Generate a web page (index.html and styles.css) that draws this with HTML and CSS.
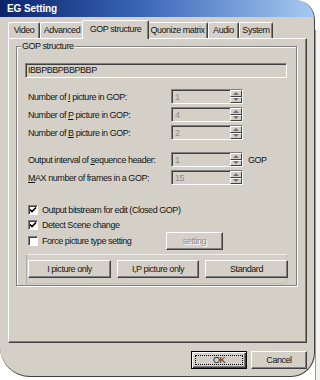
FILE: index.html
```html
<!DOCTYPE html>
<html>
<head>
    <meta charset="UTF-8">
    <title>MPEG Setting</title>
    <link rel="stylesheet" href="styles.css">
</head>
<body>
    <div class="screen">
        <div class="window">
            <div class="titlebar">EG Setting</div>

            <div class="tabs">
                <div class="tab video">Video</div>
                <div class="tab advanced">Advanced</div>
                <div class="tab active">GOP structure</div>
                <div class="tab quantize">Quonize matrix</div>
                <div class="tab audio">Audio</div>
                <div class="tab system">System</div>
            </div>

            <div class="panel">
                <div class="group">
                    <div class="legend">GOP structure</div>
                    <div class="pattern">IBBPBBPBBPBBP</div>

                    <div class="fields">
                        <span class="label">Number of <u>I</u> picture in GOP:</span>
                        <div class="spin"><span class="val">1</span><span class="arrows"><span class="up"></span><span class="down"></span></span></div>
                        <span></span>

                        <span class="label">Number of <u>P</u> picture in GOP:</span>
                        <div class="spin"><span class="val">4</span><span class="arrows"><span class="up"></span><span class="down"></span></span></div>
                        <span></span>

                        <span class="label">Number of <u>B</u> picture in GOP:</span>
                        <div class="spin"><span class="val">2</span><span class="arrows"><span class="up"></span><span class="down"></span></span></div>
                        <span></span>
                    </div>

                    <div class="fields second">
                        <span class="label">Output interval of <u>s</u>equence header:</span>
                        <div class="spin"><span class="val">1</span><span class="arrows"><span class="up"></span><span class="down"></span></span></div>
                        <span class="unit">GOP</span>

                        <span class="label"><u>M</u>AX number of frames in a GOP:</span>
                        <div class="spin"><span class="val">15</span><span class="arrows"><span class="up"></span><span class="down"></span></span></div>
                        <span></span>
                    </div>

                    <div class="checks">
                        <div class="check">
                            <span class="box"><svg width="8" height="8" viewBox="0 0 8 8"><path d="M1 3.5 L3 5.5 L7 1.5" stroke="#000" stroke-width="1.7" fill="none"/></svg></span>
                            Output bitstream for edit (Closed GOP)
                        </div>
                        <div class="check">
                            <span class="box"><svg width="8" height="8" viewBox="0 0 8 8"><path d="M1 3.5 L3 5.5 L7 1.5" stroke="#000" stroke-width="1.7" fill="none"/></svg></span>
                            Detect Scene change
                        </div>
                        <div class="check-row">
                            <div class="check wide">
                                <span class="box"></span>
                                Force picture type setting
                            </div>
                            <div class="btn small disabled">setting</div>
                        </div>
                    </div>

                    <div class="presets">
                        <div class="btn">I picture only</div>
                        <div class="btn">I,P picture only</div>
                        <div class="btn">Standard</div>
                    </div>
                </div>
            </div>

            <div class="footer">
                <div class="btn default"><span class="focus">OK</span></div>
                <div class="btn cancel">Cancel</div>
            </div>
        </div>
        <div class="behind"></div>
    </div>
</body>
</html>
```

FILE: styles.css
```css
body {
    margin: 0;
    background-color: #fff;
    font-family: "Liberation Sans", Arial, sans-serif;
    font-size: 9px;
    letter-spacing: -0.45px;
    color: #151515;
}
.screen {
    width: 320px;
    height: 380px;
    display: flex;
    align-items: flex-start;
    background-color: #fff;
    overflow: hidden;
}
.window {
    width: 316px;
    height: 377px;
    box-sizing: border-box;
    background-color: #d4d0c8;
    border-right: 1px solid #404040;
    border-bottom: 1px solid #404040;
    border-radius: 0 20px 24px 30px;
    overflow: hidden;
    display: flex;
    flex-direction: column;
}
.titlebar {
    height: 17px;
    flex: none;
    padding-left: 7px;
    display: flex;
    align-items: center;
    background: linear-gradient(90deg, #0a246a, #3a66b8 45%, #a6caf0);
    color: #fff;
    font-weight: bold;
    font-size: 10px;
    letter-spacing: -0.1px;
}
.tabs {
    height: 21px;
    flex: none;
    display: flex;
    align-items: flex-end;
    padding-left: 8px;
}
.tab {
    height: 16px;
    box-sizing: border-box;
    padding-bottom: 1px;
    display: flex;
    align-items: center;
    justify-content: center;
    border-top: 1px solid #fff;
    border-left: 1px solid #fff;
    border-right: 1px solid #404040;
    box-shadow: inset -1px 0 0 #808080;
    border-radius: 2px 2px 0 0;
    white-space: nowrap;
}
.tab.video {
    width: 32px;
}
.tab.advanced {
    width: 44px;
}
.tab.quantize {
    width: 61px;
}
.tab.audio {
    width: 31px;
}
.tab.system {
    width: 34px;
}
.tab.active {
    width: 67px;
    height: 19px;
    margin: 0 -2px -1px;
    padding-bottom: 3px;
    position: relative;
    z-index: 1;
    background-color: #d4d0c8;
}
.panel {
    height: 305px;
    flex: none;
    box-sizing: border-box;
    margin: 0 7px 0 8px;
    padding: 7px 9px 0 7px;
    border-top: 1px solid #fff;
    border-left: 1px solid #fff;
    border-right: 1px solid #404040;
    border-bottom: 1px solid #404040;
    box-shadow: inset -1px -1px 0 #808080;
}
.group {
    display: flex;
    flex-direction: column;
    padding: 0 9px 1px 8px;
    border: 1px solid #808080;
    box-shadow: inset 1px 1px 0 #fff, 1px 1px 0 #fff;
}
.legend {
    align-self: flex-start;
    margin: -7px 0 0 -4px;
    padding: 0 1px;
    line-height: 12px;
    background-color: #d4d0c8;
}
.pattern {
    height: 15px;
    box-sizing: border-box;
    margin-top: 11px;
    padding-left: 2px;
    line-height: 13px;
    border: 1px solid;
    border-color: #808080 #fff #fff #808080;
    box-shadow: inset 1px 1px 0 #404040;
}
.fields {
    display: grid;
    grid-template-columns: 138px 72px auto;
    grid-auto-rows: 15px;
    column-gap: 5px;
    row-gap: 3px;
    align-items: center;
    margin-top: 11px;
    padding-left: 3px;
}
.fields.second {
    margin-top: 12px;
}
.label, .unit {
    white-space: nowrap;
}
.spin {
    height: 15px;
    box-sizing: border-box;
    display: flex;
    border: 1px solid;
    border-color: #808080 #fff #fff #808080;
    box-shadow: inset 1px 1px 0 #404040;
}
.val {
    flex: 1;
    padding: 1px 0 0 3px;
    line-height: 12px;
    color: #8c8c8c;
}
.arrows {
    width: 12px;
    display: flex;
    flex-direction: column;
}
.arrows span {
    flex: 1;
    display: flex;
    align-items: center;
    justify-content: center;
    border: 1px solid;
    border-color: #fff #404040 #404040 #fff;
}
.up::after, .down::after {
    content: "";
    border-left: 3px solid transparent;
    border-right: 3px solid transparent;
}
.up::after {
    border-bottom: 3px solid #707070;
}
.down::after {
    border-top: 3px solid #707070;
}
.checks {
    display: flex;
    flex-direction: column;
    margin-top: 17px;
    padding-left: 3px;
}
.check {
    height: 15px;
    display: flex;
    align-items: center;
    gap: 4px;
    white-space: nowrap;
}
.check-row {
    height: 18px;
    display: flex;
    align-items: center;
}
.check.wide {
    width: 138px;
}
.box {
    width: 10px;
    height: 10px;
    box-sizing: border-box;
    display: flex;
    align-items: center;
    justify-content: center;
    background-color: #fff;
    border: 1px solid;
    border-color: #808080 #fff #fff #808080;
    box-shadow: inset 1px 1px 0 #404040;
}
.btn {
    height: 18px;
    box-sizing: border-box;
    display: flex;
    align-items: center;
    justify-content: center;
    background-color: #d4d0c8;
    border: 1px solid;
    border-color: #fff #404040 #404040 #fff;
    box-shadow: inset -1px -1px 0 #808080;
    white-space: nowrap;
}
.btn.small {
    width: 57px;
}
.btn.disabled {
    color: #8c8c8c;
    text-shadow: 1px 1px 0 #fff;
}
.presets {
    display: grid;
    grid-template-columns: 83px 82px 83px;
    column-gap: 6px;
    height: 30px;
    box-sizing: border-box;
    margin: 4px 0 0 1px;
    padding: 5px 0 0 1px;
    border: 1px solid;
    border-color: #eeece7 #c4c0b8 #c4c0b8 #b0aca4;
}
.footer {
    flex: 1;
    display: flex;
    justify-content: flex-end;
    gap: 4px;
    padding: 8px 7px 0 0;
}
.footer .btn {
    width: 56px;
}
.btn.default {
    border: 1px solid #000;
    box-shadow: inset 1px 1px 0 #fff, inset -1px -1px 0 #404040, inset -2px -2px 0 #808080;
    padding: 3px;
}
.focus {
    flex: 1;
    align-self: stretch;
    display: flex;
    align-items: center;
    justify-content: center;
    border: 1px dotted #000;
}
.behind {
    width: 4px;
    height: 370px;
    margin-top: 30px;
    background-color: #f2f2f0;
    border-left: 1px solid #9a9a9a;
}
```
